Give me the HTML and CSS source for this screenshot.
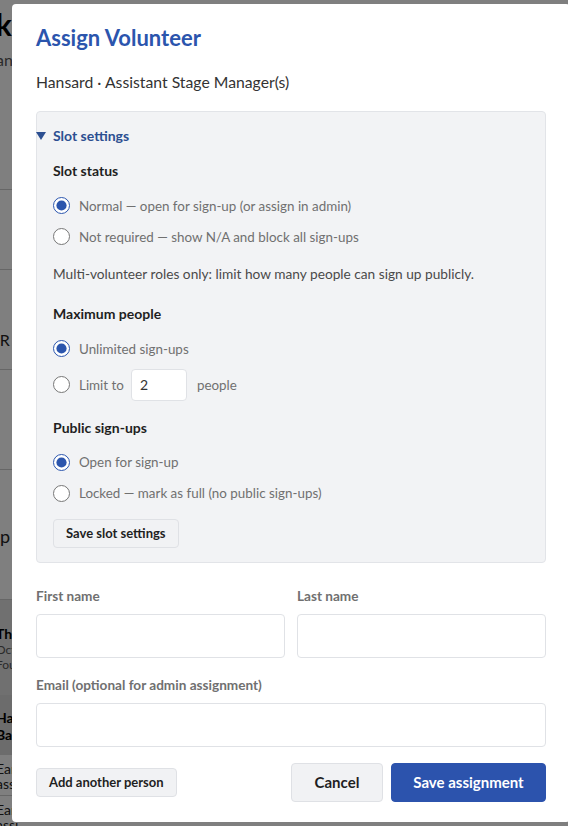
FILE: index.html
```html
<!DOCTYPE html>
<html lang="en">
<head>
<meta charset="utf-8">
<title>Assign Volunteer</title>
<link rel="stylesheet" href="styles.css">
</head>
<body>
<div class="page">
  <h1 class="page-title">Workbook</h1>
  <p class="page-sub">Hansard rehearsal timings</p>
  <div class="page-row"></div>
  <div class="page-row tall"></div>
  <div class="page-row"><span class="frag">Run R</span></div>
  <div class="page-row"></div>
  <div class="page-row big"><span class="frag">Pick the p</span></div>
  <div class="page-band">
    <div class="band-title">The W</div>
    <div class="band-sub">Octo</div>
    <div class="band-sub">Fourth</div>
  </div>
  <div class="page-band2"><div class="band-title">Han</div><div class="band-title">Back</div></div>
  <div class="page-cell"><div>Earlie</div><div>assi</div></div>
  <div class="page-cell"><div>Earlie</div><div>assi</div></div>
  <div class="page-cell"><div>Earlie</div><div>assigned</div></div>
</div>

<div class="overlay">
  <div class="modal">
    <h2 class="modal-title">Assign Volunteer</h2>
    <p class="modal-sub">Hansard · Assistant Stage Manager(s)</p>

    <details class="slot" open>
      <summary class="slot-summary">Slot settings</summary>

      <div class="group">
        <div class="group-title">Slot status</div>
        <label class="radio"><input type="radio" name="status" checked><span>Normal — open for sign-up (or assign in admin)</span></label>
        <label class="radio"><input type="radio" name="status"><span>Not required — show N/A and block all sign-ups</span></label>
      </div>

      <p class="help">Multi-volunteer roles only: limit how many people can sign up publicly.</p>

      <div class="group">
        <div class="group-title">Maximum people</div>
        <label class="radio"><input type="radio" name="max" checked><span>Unlimited sign-ups</span></label>
        <label class="radio limit"><input type="radio" name="max"><span>Limit to</span><input class="num" type="text" value="2"><span>people</span></label>
      </div>

      <div class="group">
        <div class="group-title">Public sign-ups</div>
        <label class="radio"><input type="radio" name="pub" checked><span>Open for sign-up</span></label>
        <label class="radio"><input type="radio" name="pub"><span>Locked — mark as full (no public sign-ups)</span></label>
      </div>

      <button class="btn-small" type="button">Save slot settings</button>
    </details>

    <div class="fields two">
      <div class="field">
        <label class="field-label">First name</label>
        <input class="field-input" type="text">
      </div>
      <div class="field">
        <label class="field-label">Last name</label>
        <input class="field-input" type="text">
      </div>
    </div>
    <div class="field">
      <label class="field-label">Email (optional for admin assignment)</label>
      <input class="field-input" type="text">
    </div>

    <div class="actions">
      <button class="btn-small" type="button">Add another person</button>
      <div class="actions-right">
        <button class="btn-cancel" type="button">Cancel</button>
        <button class="btn-primary" type="button">Save assignment</button>
      </div>
    </div>
  </div>
</div>
</body>
</html>
```

FILE: styles.css
```css
* { box-sizing: border-box; }

html, body {
  margin: 0;
  padding: 0;
  height: 100%;
  overflow: hidden;
}

body {
  font-family: Lato, "Open Sans", sans-serif;
  background: #ffffff;
  color: #222;
}

/* background page (dimmed) */
.page {
  margin-left: -100px;
  width: 700px;
}
.page-title {
  margin: 0;
  padding-top: 10px;
  font-size: 30px;
  font-weight: 700;
  color: #000;
  line-height: 28px;
  text-indent: -30px;
}
.page-sub {
  margin: 12px 0 0 0;
  font-size: 16px;
  color: #555;
  text-indent: 84px;
  height: 40px;
}
.page-row {
  border-bottom: 1px solid #ccc;
  height: 100px;
}
.page-row.tall { height: 80px; }
.page-row.big { height: 130px; }
.frag {
  display: block;
  padding-top: 60px;
  padding-left: 68px;
  font-size: 16px;
  color: #222;
}
.page-row.big .frag { padding-top: 55px; padding-left: 32px; font-size: 18px; }
.page-band {
  background: #e0e0e0;
  padding: 25px 0 20px 96px;
  height: 95px;
}
.band-title { font-weight: 700; font-size: 14px; color: #000; }
.band-sub { font-size: 12px; color: #555; }
.page-band2 {
  background: #d8d8d8;
  padding: 14px 0 10px 96px;
  height: 60px;
}
.page-cell {
  padding: 6px 0 4px 96px;
  font-size: 14px;
  color: #222;
  border-bottom: 1px solid #ccc;
  line-height: 15px;
}

/* overlay + modal */
.overlay {
  position: fixed;
  inset: 0;
  background: rgba(0, 0, 0, 0.5);
}

.modal {
  position: absolute;
  left: 12px;
  top: 4px;
  width: 558px;
  height: 818px;
  background: #fff;
  border-radius: 4px;
  padding: 20px 24px 0 24px;
  overflow: hidden;
}

.modal-title {
  margin: 0;
  font-size: 22px;
  font-weight: 700;
  color: #2b55ad;
  line-height: 28px;
}

.modal-sub {
  margin: 20px 0 0 0;
  font-size: 15.75px;
  color: #333;
  line-height: 20px;
}

.slot {
  margin-top: 19px;
  background: #f2f3f5;
  border: 1px solid #e2e4e8;
  border-radius: 4px;
  padding: 14px 16px 14px 16px;
}

.slot-summary {
  list-style: none;
  cursor: pointer;
  font-size: 14px;
  font-weight: 700;
  color: #2c4f91;
  line-height: 20px;
  margin-left: -17px;
  display: flex;
  align-items: center;
  gap: 7px;
}
.slot-summary::-webkit-details-marker { display: none; }
.slot-summary::before {
  content: "";
  width: 0;
  height: 0;
  border-left: 5px solid transparent;
  border-right: 5px solid transparent;
  border-top: 8px solid #2c4f91;
}

.group { margin-top: 15px; }

.group-title {
  font-size: 14px;
  font-weight: 700;
  color: #1f1f1f;
  line-height: 20px;
  margin-bottom: 16px;
}

.radio {
  display: flex;
  align-items: center;
  gap: 8px;
  font-size: 13.4px;
  color: #707070;
  height: 17px;
  margin-bottom: 14px;
}
.radio:last-child { margin-bottom: 0; }
.radio input[type="radio"] {
  width: 17px;
  height: 17px;
  margin: 0 1px 0 0;
  accent-color: #2b55ad;
}
.radio.limit {
  height: 32px;
  margin-top: -2.5px;
}

.num {
  width: 56px;
  height: 32px;
  border: 1px solid #e0e2e6;
  border-radius: 4px;
  background: #fff;
  padding: 0 8px;
  font-family: inherit;
  font-size: 14px;
  color: #333;
  margin: 0 2px 0 -1px;
}

.help {
  margin: 19px 0 0 0;
  font-size: 13.7px;
  color: #4a4a4a;
  line-height: 20px;
}

.help + .group { margin-top: 20px; }
.group + .group { margin-top: 17px; }

.btn-small {
  font-family: inherit;
  font-size: 13px;
  font-weight: 700;
  color: #1f1f1f;
  background: #f1f2f4;
  border: 1px solid #dfe1e5;
  border-radius: 4px;
  height: 29px;
  padding: 0 12px;
  cursor: pointer;
}
.slot .btn-small { margin-top: 17px; }

.fields.two {
  display: grid;
  grid-template-columns: 1fr 1fr;
  gap: 12px;
  margin-top: 24px;
}

.field { display: flex; flex-direction: column; }
.fields + .field { margin-top: 18px; }

.field-label {
  font-size: 13.6px;
  font-weight: 700;
  color: #707070;
  line-height: 18px;
  margin-bottom: 9px;
}

.field-input {
  height: 44px;
  border: 1px solid #e0e2e6;
  border-radius: 4px;
  background: #fff;
  font-family: inherit;
  font-size: 14px;
  padding: 0 10px;
}

.actions {
  display: flex;
  justify-content: space-between;
  align-items: center;
  margin-top: 16px;
}

.actions-right { display: flex; gap: 8px; }

.btn-cancel, .btn-primary {
  font-family: inherit;
  font-size: 15px;
  font-weight: 700;
  height: 39px;
  border-radius: 4px;
  cursor: pointer;
}
.btn-cancel {
  width: 92px;
  background: #f1f2f4;
  border: 1px solid #dfe1e5;
  color: #1f1f1f;
}
.btn-primary {
  width: 155px;
  background: #2c53ad;
  border: 1px solid #2c53ad;
  color: #fff;
}
```
